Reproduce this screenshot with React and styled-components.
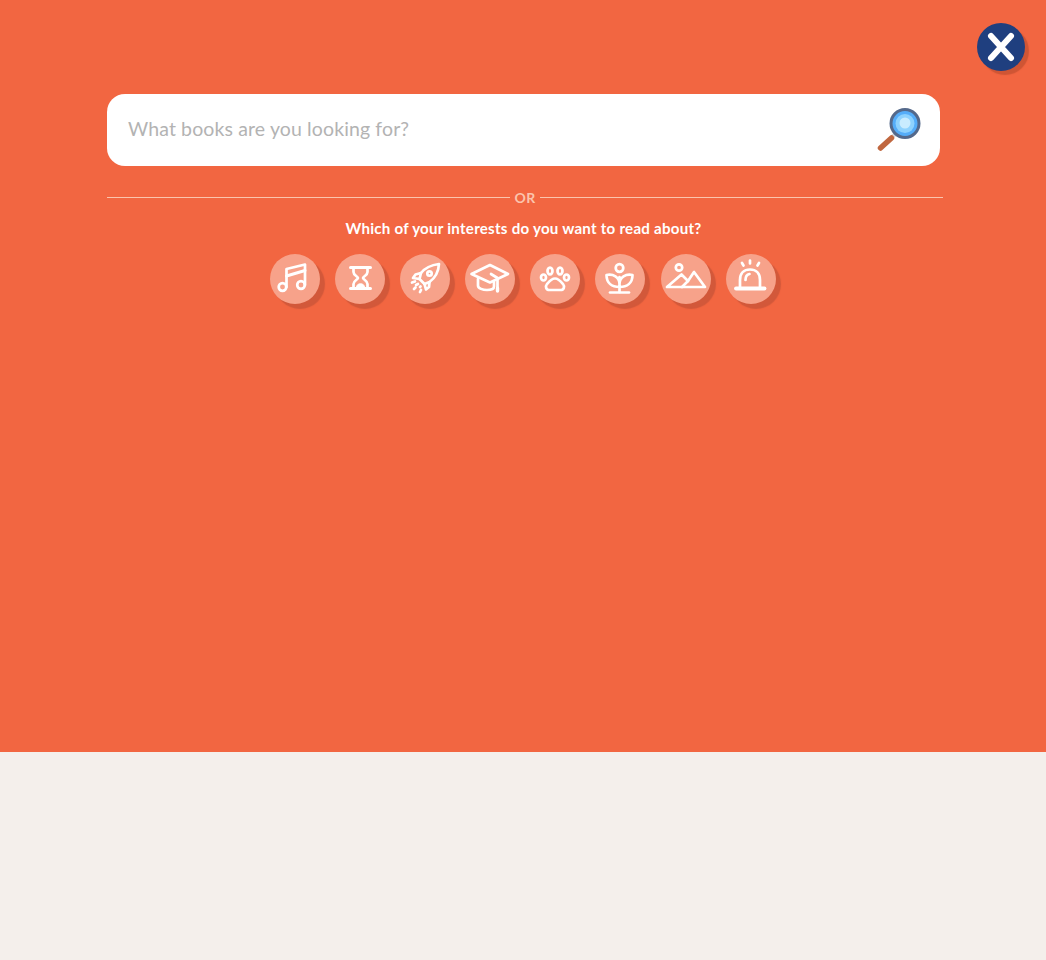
import React from 'react';
import styled, { createGlobalStyle } from 'styled-components';

const Global = createGlobalStyle`
  html, body { margin: 0; padding: 0; background: #f4efeb; }
  body { font-family: "Lato", "Open Sans", sans-serif; }
`;

const Page = styled.div`
  width: 1046px;
  height: 960px;
  background: #f4efeb;
  overflow: hidden;
`;

const Panel = styled.section`
  position: relative;
  height: 752px;
  box-sizing: border-box;
  padding: 94px 103px 0 107px;
  background: #f26641;
`;

const CloseButton = styled.button`
  position: absolute;
  top: 23px;
  left: 977px;
  width: 48px;
  height: 48px;
  padding: 0;
  border: 0;
  border-radius: 50%;
  background: #1f3f7f;
  box-shadow: 4px 4px 1px #cf5534;
  display: flex;
  align-items: center;
  justify-content: center;
`;

const SearchBar = styled.div`
  width: 833px;
  height: 72px;
  box-sizing: border-box;
  padding: 0 19px 4px 21px;
  background: #fff;
  border-radius: 18px;
  display: flex;
  align-items: center;
  justify-content: space-between;
`;

const Placeholder = styled.span`
  font-size: 19.5px;
  color: #b3b3b3;
  letter-spacing: 0.12px;
`;

const Lens = styled.svg`
  margin-bottom: -4px;
`;

const Divider = styled.div`
  margin-top: 24px;
  display: flex;
  align-items: center;
  gap: 5px;
  height: 14px;
`;

const Line = styled.span`
  flex: 1;
  height: 1px;
  background: #fbc4ad;
`;

const OrLabel = styled.span`
  font-size: 14px;
  font-weight: 700;
  color: #fbc4ad;
  letter-spacing: 0.3px;
`;

const Question = styled.h2`
  margin: 14px 0 0 -3px;
  font-size: 15.1px;
  line-height: 20px;
  font-weight: 700;
  color: #fff;
  text-align: center;
  letter-spacing: 0.25px;
`;

const Interests = styled.div`
  margin: 16px 0 0 163px;
  display: flex;
  gap: 15.1px;
`;

const Interest = styled.button`
  width: 50px;
  height: 50px;
  padding: 0;
  border: 0;
  border-radius: 50%;
  background: #f7a28a;
  box-shadow: 5px 5px 1px #d2583a;
  display: flex;
  align-items: center;
  justify-content: center;
  flex: none;
`;

const Icon = ({ children }) => (
  <svg width="50" height="50" viewBox="0 0 50 50" fill="none" stroke="#fff" strokeWidth="2.7" strokeLinecap="round" strokeLinejoin="round">
    {children}
  </svg>
);

const icons = [
  ['music', <><circle cx="12.500" cy="33" r="3.800" /><circle cx="31" cy="31" r="3.800" /><path d="M16.500 33V15L35 10.500V31" /><path d="M16.500 22L35 16.500" strokeWidth="3" /></>],
  ['time', <><path d="M15.500 13.500H35.500M15.500 34.500H35.500" strokeWidth="3" /><path d="M18.500 14V18C18.500 21.500 23 22.500 23 24C23 25.500 18.500 26.500 18.500 30V34M32.500 14V18C32.500 21.500 28 22.500 28 24C28 25.500 32.500 26.500 32.500 30V34" /><path d="M21.500 33C21.500 28.500 29.500 28.500 29.500 33Z" fill="#fff" strokeWidth="1" /></>],
  ['rocket', <><path d="M21 19C25 14 31 11 39 10C38.500 18 35 24 29.500 28L24.500 30L19.500 25Z" /><circle cx="29.500" cy="19.500" r="2.200" /><path d="M21 19L15.500 20.500L13 24L19.500 25M29.500 28L29 33L26 35.500L24.500 30" /><path d="M12 28.500L15 27.500M16 31L18 30M14 35L15.500 33.500M20 38L21 36M20 33L20.500 32.500" /></>],
  ['education', <><path d="M6.500 20L25 11L43 20L25 28.500Z" /><path d="M13 25V31.500C13 34.500 18 36 22 36C26 36 29 35 29 32.500V28" /><path d="M26 20L32.500 24V36" /><path d="M32.500 34V37" strokeWidth="3.400" /></>],
  ['pets', <><path d="M25 24.500C21.500 24.500 19.500 27 17 30C15 32.500 16 36 19.500 36H30.500C34 36 35 32.500 33 30C30.500 27 28.500 24.500 25 24.500Z" /><ellipse cx="20" cy="17" rx="2.500" ry="3.300" /><ellipse cx="30" cy="17" rx="2.500" ry="3.300" /><ellipse cx="13.500" cy="23.500" rx="2.500" ry="3" /><ellipse cx="36.500" cy="23.500" rx="2.500" ry="3" /></>],
  ['nature', <><circle cx="24.500" cy="14" r="3.800" /><path d="M24.500 38V23M24.500 33C17 33 11.500 29 11.500 21C18 19.500 24.500 23 24.500 30M24.500 33C32 33 37.500 29 37.500 21C31 19.500 24.500 23 24.500 30" /><path d="M15 38.500H34" /></>],
  ['landscape', <><circle cx="18" cy="13.500" r="3.200" /><path d="M6 33H44L33 18L27 27L20.500 20.500L6 33Z" /><path d="M27 27L21 33" /></>],
  ['alarm', <><path d="M14 33V26C14 19.500 18 15.500 24 15.500C30 15.500 34 19.500 34 26V33" /><path d="M19.500 26C19.500 23 21 20.500 23.500 20" /><path d="M10 34.500H38.500" strokeWidth="3.800" /><path d="M24 6.500V9.500M16 9L17.500 11.500M33 9L31.500 11.500" /></>],
];

export default function App() {
  return (
    <Page>
      <Global />
      <Panel>
        <CloseButton aria-label="Close">
          <svg width="32" height="32" viewBox="0 0 32 32" fill="none" stroke="#fff" strokeWidth="6" strokeLinecap="round">
            <path d="M6 5L26 27M26 5L6 27" />
          </svg>
        </CloseButton>
        <SearchBar>
          <Placeholder>What books are you looking for?</Placeholder>
          <Lens width="44" height="44" viewBox="0 0 44 44">
            <path d="M15 29L19.500 25" stroke="#d4d7dc" strokeWidth="4" />
            <path d="M3.500 40L14.500 30" stroke="#c0673f" strokeWidth="5.500" strokeLinecap="round" />
            <circle cx="28" cy="15.500" r="14" fill="#55adf9" stroke="#54698b" strokeWidth="3" />
            <circle cx="28" cy="15.500" r="9.500" fill="#8ed2fe" />
            <circle cx="28" cy="15" r="5.500" fill="#c9ecff" />
          </Lens>
        </SearchBar>
        <Divider>
          <Line />
          <OrLabel>OR</OrLabel>
          <Line />
        </Divider>
        <Question>Which of your interests do you want to read about?</Question>
        <Interests>
          {icons.map(([name, drawing]) => (
            <Interest key={name} aria-label={name}>
              <Icon>{drawing}</Icon>
            </Interest>
          ))}
        </Interests>
      </Panel>
    </Page>
  );
}
